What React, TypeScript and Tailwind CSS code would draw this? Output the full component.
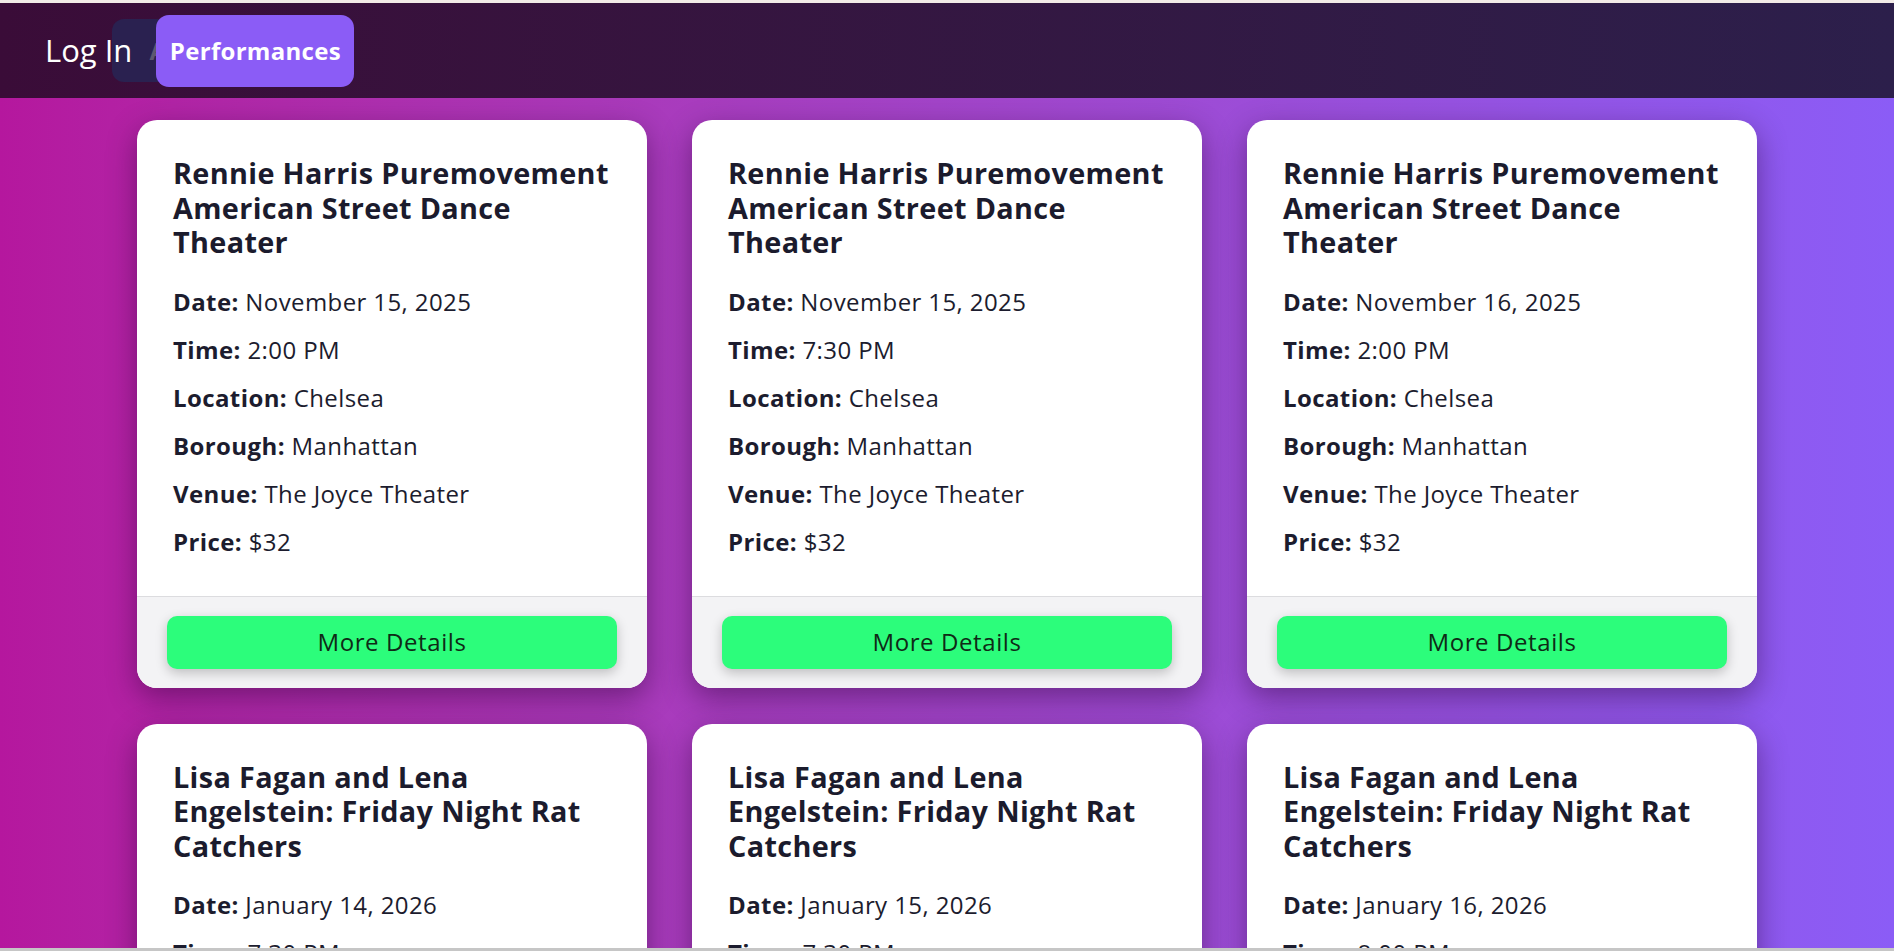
import React from "react";

type Perf = {
  title: string;
  date: string;
  time: string;
  location: string;
  borough: string;
  venue: string;
  price: string;
};

const rennie = "Rennie Harris Puremovement American Street Dance Theater";
const lisa = "Lisa Fagan and Lena Engelstein: Friday Night Rat Catchers";

const perfs: Perf[] = [
  { title: rennie, date: "November 15, 2025", time: "2:00 PM", location: "Chelsea", borough: "Manhattan", venue: "The Joyce Theater", price: "$32" },
  { title: rennie, date: "November 15, 2025", time: "7:30 PM", location: "Chelsea", borough: "Manhattan", venue: "The Joyce Theater", price: "$32" },
  { title: rennie, date: "November 16, 2025", time: "2:00 PM", location: "Chelsea", borough: "Manhattan", venue: "The Joyce Theater", price: "$32" },
  { title: lisa, date: "January 14, 2026", time: "7:30 PM", location: "Chelsea", borough: "Manhattan", venue: "The Joyce Theater", price: "$32" },
  { title: lisa, date: "January 15, 2026", time: "7:30 PM", location: "Chelsea", borough: "Manhattan", venue: "The Joyce Theater", price: "$32" },
  { title: lisa, date: "January 16, 2026", time: "8:00 PM", location: "Chelsea", borough: "Manhattan", venue: "The Joyce Theater", price: "$32" },
];

function Row({ label, value }: { label: string; value: string }) {
  return (
    <p className="text-[24px] leading-[36px] tracking-[0.4px] mb-[12px] last:mb-0 text-[#1c1c2e] whitespace-nowrap">
      <strong className="font-bold">{label}:</strong> {value}
    </p>
  );
}

function Card({ p }: { p: Perf }) {
  return (
    <div className="bg-white rounded-[20px] overflow-hidden flex flex-col shadow-[0_10px_30px_rgba(40,0,50,0.45)]">
      <div className="px-[36px] pt-[36px] pb-[36px]">
        <h2 className="text-[28.8px] leading-[1.2] tracking-[0.35px] font-bold text-[#1b1b2d] mb-[24px]">{p.title}</h2>
        <Row label="Date" value={p.date} />
        <Row label="Time" value={p.time} />
        <Row label="Location" value={p.location} />
        <Row label="Borough" value={p.borough} />
        <Row label="Venue" value={p.venue} />
        <Row label="Price" value={p.price} />
      </div>
      <div className="border-t border-[#dcdcdf] bg-[#f3f3f5] px-[30px] py-[19px]">
        <button className="h-[53px] w-full rounded-[10px] bg-[#2cfd7b] text-[24px] tracking-[0.6px] text-[#0f2a16] shadow-[0_4px_12px_rgba(0,0,0,0.22)]">
          More Details
        </button>
      </div>
    </div>
  );
}

export default function App() {
  return (
    <div
      className="h-[951px] w-full overflow-hidden flex flex-col"
      style={{ fontFamily: '"Open Sans", "Noto Sans", sans-serif' }}
    >
      <div className="h-[3px] bg-[#f2ebe7] shrink-0" />
      <header className="h-[95px] shrink-0 flex items-center pl-[45px] bg-linear-to-r from-[#3a0c38] to-[#2c1f4b]">
        <span className="relative z-10 text-white text-[31px] font-medium">Log In</span>
        <div className="-ml-[20px] w-[80px] h-[63px] rounded-[12px] bg-[#2a2150] flex items-center pl-[37px] overflow-hidden">
          <span className="text-[24px] font-bold text-[#5d5870]">About</span>
        </div>
        <div className="relative -ml-[36px] w-[198px] h-[72px] rounded-[13px] bg-[#8b5cf6] flex items-center justify-center">
          <span className="text-white text-[24px] font-bold tracking-[0.3px]">Performances</span>
        </div>
      </header>
      <main className="flex-1 overflow-hidden bg-linear-to-r from-[#b5179e] to-[#8b5cf6] pt-[22px]">
        <div className="w-[1620px] mx-auto grid grid-cols-3 gap-x-[45px] gap-y-[36px]">
          {perfs.map((p, i) => (
            <Card key={i} p={p} />
          ))}
        </div>
      </main>
      <div className="h-[3px] bg-[#c6c6c6] shrink-0" />
    </div>
  );
}
